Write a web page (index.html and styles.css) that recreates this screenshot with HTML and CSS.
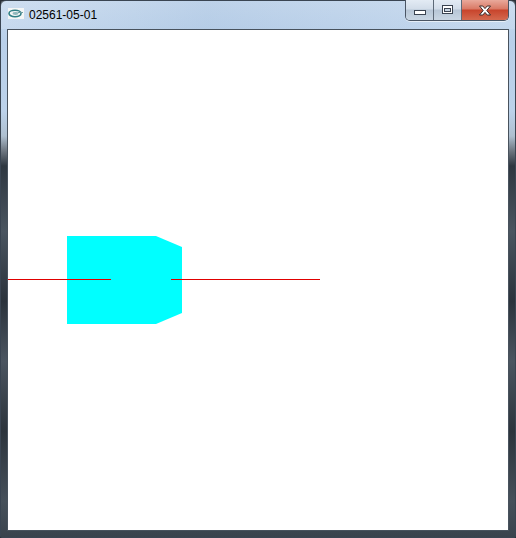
FILE: index.html
```html
<!DOCTYPE html>
<html>
<head>
<meta charset="utf-8">
<link rel="stylesheet" href="styles.css">
</head>
<body>
<div class="window">
  <div class="titlebar">
    <svg class="app-icon" width="16" height="11" viewBox="0 0 16 11">
      <rect x="0" y="0" width="16" height="11" fill="#f4f6f6"/>
      <ellipse cx="7" cy="5.5" rx="6" ry="3.2" fill="none" stroke="#2f7f86" stroke-width="1.6"/>
      <ellipse cx="7.5" cy="5.5" rx="3" ry="1.4" fill="#8fb8bc"/>
      <path d="M10 4.5 L15 4.5" stroke="#6f9da2" stroke-width="1"/>
    </svg>
    <span class="title">02561-05-01</span>
    <div class="buttons">
      <div class="btn min">
        <svg width="12" height="6" viewBox="0 0 12 6"><rect x="0.5" y="0.5" width="11" height="4" fill="#fff" stroke="#3a4350"/></svg>
      </div>
      <div class="btn max">
        <svg width="11" height="10" viewBox="0 0 11 10"><rect x="0.5" y="0.5" width="10" height="8" fill="#fff" stroke="#3a4350"/><rect x="2.5" y="3.5" width="6" height="3" fill="#c9d6e3" stroke="#3a4350"/></svg>
      </div>
      <div class="btn close">
        <svg width="14" height="11" viewBox="0 0 14 11"><path d="M1.5 1 L4.8 1 L7 3.6 L9.2 1 L12.5 1 L8.8 5.5 L12.5 10 L9.2 10 L7 7.4 L4.8 10 L1.5 10 L5.2 5.5 Z" fill="#fff" stroke="#3b2a28" stroke-width="1"/></svg>
      </div>
    </div>
  </div>
  <div class="client">
    <svg class="canvas" width="500" height="500" viewBox="0 0 500 500">
      <polygon points="59,206 148,206 174,217 174,283 148,294 59,294" fill="#00ffff"/>
      <line x1="0" y1="249.5" x2="103" y2="249.5" stroke="#e00000" stroke-width="1"/>
      <line x1="163" y1="249.5" x2="312" y2="249.5" stroke="#e00000" stroke-width="1"/>
    </svg>
  </div>
</div>
</body>
</html>
```
FILE: styles.css
```css
html, body {
  margin: 0;
  padding: 0;
  background: #2a3038;
}
.window {
  width: 516px;
  height: 538px;
  box-sizing: border-box;
  border: 1px solid #3a4552;
  border-radius: 6px 6px 2px 2px;
  background: linear-gradient(to bottom,
    #c6d9ee 0px, #b9d0ea 40px, #bcd2ea 110px, #aebfcf 135px,
    #6d7680 150px, #2e3740 165px, #4a5560 230px, #2b333c 300px,
    #4b5560 360px, #2c343c 430px, #46505a 500px, #39424c 538px);
  display: flex;
  flex-direction: column;
  font-family: "Liberation Sans", Arial, sans-serif;
}
.titlebar {
  height: 28px;
  display: flex;
  align-items: flex-start;
  padding-left: 7px;
  padding-right: 6px;
  background: linear-gradient(to right, rgba(255,255,255,0.15), rgba(140,170,205,0.15) 40%, rgba(255,255,255,0.1));
}
.app-icon {
  margin-top: 7px;
  flex: none;
}
.title {
  margin-left: 5px;
  margin-top: 7px;
  font-size: 12px;
  line-height: 14px;
  color: #000;
}
.buttons {
  margin-left: auto;
  display: flex;
  margin-top: -1px;
  height: 20px;
  border: 1px solid #4a5564;
  border-top: none;
  border-radius: 0 0 5px 5px;
  overflow: hidden;
  box-shadow: 0 1px 0 rgba(255,255,255,0.6);
}
.btn {
  display: flex;
  align-items: center;
  justify-content: center;
  height: 20px;
}
.min, .max {
  width: 27px;
  background: linear-gradient(to bottom, #e3ebf4 0%, #d2dde9 45%, #b7c6d6 50%, #c9d6e3 100%);
  border-right: 1px solid #5d6977;
}
.min svg { margin-top: 6px; }
.close {
  width: 46px;
  background: linear-gradient(to bottom, #e9a99b 0%, #d97965 45%, #c8442c 50%, #d4694f 100%);
}
.client {
  margin: 0 6px;
  width: 500px;
  height: 500px;
  border: 1px solid #48525d;
  background: #fff;
}
.canvas {
  display: block;
}
```
